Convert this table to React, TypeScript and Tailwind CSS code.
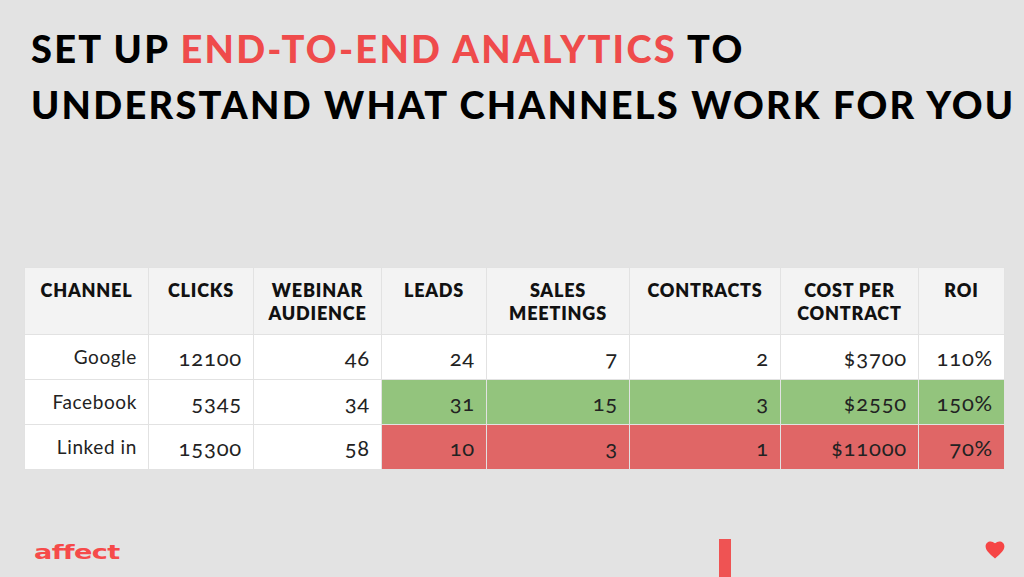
const rows = [
  { ch: 'Google', clicks: '12100', web: '46', leads: '24', meet: '7', con: '2', cost: '$3700', roi: '110%', tone: '' },
  { ch: 'Facebook', clicks: '5345', web: '34', leads: '31', meet: '15', con: '3', cost: '$2550', roi: '150%', tone: 'bg-[#93c47d]' },
  { ch: 'Linked in', clicks: '15300', web: '58', leads: '10', meet: '3', con: '1', cost: '$11000', roi: '70%', tone: 'bg-[#e06666]' },
]

const heads = ['CHANNEL', 'CLICKS', 'WEBINAR AUDIENCE', 'LEADS', 'SALES MEETINGS', 'CONTRACTS', 'COST PER CONTRACT', 'ROI']
const widths = ['w-[124px]', 'w-[105px]', 'w-[128px]', 'w-[105px]', 'w-[143px]', 'w-[151px]', 'w-[138px]', 'w-[86px]']

export default function App() {
  return (
    <div className="flex h-[577px] w-[1024px] flex-col overflow-hidden bg-[#e3e3e3] font-['Lato','Liberation_Sans',sans-serif] text-[#222]">
      <h1 className="ml-[31px] mt-[20px] text-[38px] font-black uppercase leading-[56px] tracking-[2.25px] text-black">
        Set up <span className="text-[#ef4b4b]">end-to-end analytics</span> to
        <br />
        understand what channels work for you
      </h1>

      <table className="ml-[24px] mt-[135px] w-[980px] table-fixed border-collapse">
        <thead>
          <tr className="h-[67px] bg-[#f3f3f3]">
            {heads.map((h, i) => (
              <th
                key={h}
                className={`${widths[i]} border border-[#e2e2e2] px-1 pt-[11px] align-top text-[18px] font-extrabold leading-[23px] tracking-[0.8px] text-[#111]`}
              >
                {h}
              </th>
            ))}
          </tr>
        </thead>
        <tbody className="oldstyle-nums">
          {rows.map((r) => (
            <tr key={r.ch} className="h-[45px] bg-white text-right">
              <td className="border border-[#e2e2e2] px-[11px] text-[19px] tracking-[0.6px]">{r.ch}</td>
              <td className="border border-[#e2e2e2] px-[11px] text-[22px] tracking-[0.8px]">{r.clicks}</td>
              <td className="border border-[#e2e2e2] px-[11px] text-[22px] tracking-[0.8px]">{r.web}</td>
              {[r.leads, r.meet, r.con, r.cost, r.roi].map((v, i) => (
                <td key={i} className={`border border-[#e2e2e2] px-[11px] text-[22px] tracking-[0.8px] ${r.tone}`}>
                  {v}
                </td>
              ))}
            </tr>
          ))}
        </tbody>
      </table>

      <div className="mt-auto flex h-[38px] items-start">
        <div className="w-[719px] shrink-0 pl-[34px] pt-[3px]">
          <div className="origin-left scale-x-[1.36] font-['DejaVu_Sans',sans-serif] text-[20px] font-bold leading-[20px] tracking-[-0.5px] text-[#f64a4a]">
            affect
          </div>
        </div>
        <div className="h-full w-[12px] shrink-0 bg-[#ef5353]" />
        <svg className="ml-[254px] mt-[2px] shrink-0" width="20" height="18" viewBox="0 0 24 22">
          <path
            d="M12 21.5 10.3 20C4.2 14.5 0.5 11 0.5 6.5 0.5 3 3.2 0.5 6.6 0.5c1.9 0 3.8.9 5.4 2.4C13.6 1.4 15.5.5 17.4.5c3.4 0 6.1 2.5 6.1 6 0 4.5-3.7 8-9.8 13.5L12 21.5z"
            fill="#f64545"
          />
        </svg>
      </div>
    </div>
  )
}
